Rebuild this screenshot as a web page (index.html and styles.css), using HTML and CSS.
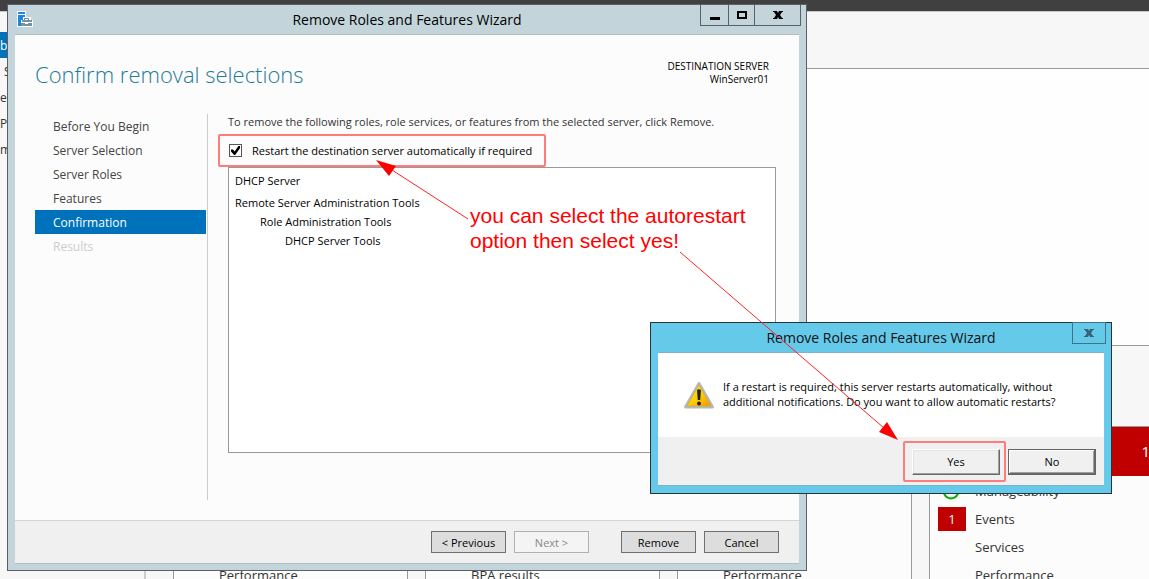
FILE: index.html
```html
<!DOCTYPE html>
<html lang="en">
<head>
<meta charset="utf-8">
<title>Remove Roles and Features Wizard</title>
<link rel="stylesheet" href="styles.css">
</head>
<body>
<div class="manager">
  <div class="topbar"></div>
  <div class="workspace">
    <nav class="sidebar" aria-label="Server Manager">
      <a class="side-link active" href="#">b</a>
      <a class="side-link inset" href="#">S</a>
      <a class="side-link" href="#">er</a>
      <a class="side-link" href="#">P</a>
      <a class="side-link" href="#">m</a>
    </nav>
    <main class="dashboard">
      <div class="toolbar"></div>
      <div class="welcome"></div>
      <section class="groups">
        <article class="tile"><ul class="tile-rows"><li class="row last">Performance</li></ul></article>
        <article class="tile"><ul class="tile-rows"><li class="row last">BPA results</li></ul></article>
        <article class="tile"><ul class="tile-rows"><li class="row last">Performance</li></ul></article>
        <article class="tile">
          <header class="tile-head">1</header>
          <ul class="tile-rows">
            <li class="row"><svg class="ok" viewBox="0 0 18 18" aria-hidden="true"><circle cx="9" cy="9" r="7.5"/><path d="M9 12V5M6 8l3-3 3 3"/></svg>Manageability</li>
            <li class="row"><span class="count">1</span>Events</li>
            <li class="row">Services</li>
            <li class="row last">Performance</li>
          </ul>
        </article>
      </section>
    </main>
  </div>
</div>

<section class="window wizard" aria-labelledby="wizard-title">
  <header class="titlebar">
    <svg class="app-icon" viewBox="0 0 17 17" aria-hidden="true">
      <path fill="#fff" d="M0 0h9v6h5v3h2v7H0z"/>
      <path fill="#1c86dc" d="M1 1h7v2H1zM1 4h7v2H6v3H4v6H1z"/>
      <path fill="#7590a0" d="M7 7h5v2h3v2H5V9h2zM4 12h4v1h3v-1h4v3H4z"/>
      <path fill="#fff" d="M8 8h3v1H8zM8 11h3v1H8z"/>
    </svg>
    <h1 class="title" id="wizard-title">Remove Roles and Features Wizard</h1>
    <div class="controls">
      <button class="control" aria-label="Minimize"><svg viewBox="0 0 12 10"><path d="M1 7h10v3H1z"/></svg></button>
      <button class="control maximize" aria-label="Maximize"><svg viewBox="0 0 12 10"><path fill-rule="evenodd" d="M1 1h10v8H1zM3 3v4h6V3z"/></svg></button>
      <button class="control close" aria-label="Close"><svg viewBox="0 0 12 10"><path d="M1 1h4l1 2 1-2h4v1h-1L8 5l2 3h1v1H7L6 7 5 9H1V8h1l2-3-2-3H1z"/></svg></button>
    </div>
  </header>
  <div class="wizard-body">
    <div class="wizard-head">
      <h2 class="heading">Confirm removal selections</h2>
      <p class="destination">DESTINATION SERVER<br>WinServer01</p>
    </div>
    <div class="wizard-main">
      <nav class="steps" aria-label="Wizard steps">
        <a class="step" href="#">Before You Begin</a>
        <a class="step" href="#">Server Selection</a>
        <a class="step" href="#">Server Roles</a>
        <a class="step" href="#">Features</a>
        <a class="step current" href="#" aria-current="step">Confirmation</a>
        <span class="step disabled">Results</span>
      </nav>
      <div class="page">
        <p class="intro">To remove the following roles, role services, or features from the selected server, click Remove.</p>
        <label class="restart"><input class="check" type="checkbox" checked>Restart the destination server automatically if required</label>
        <ul class="selections">
          <li class="role">DHCP Server</li>
          <li>Remote Server Administration Tools
            <ul>
              <li>Role Administration Tools
                <ul><li>DHCP Server Tools</li></ul>
              </li>
            </ul>
          </li>
        </ul>
      </div>
    </div>
    <footer class="wizard-foot">
      <button class="button">&lt; Previous</button>
      <button class="button" disabled>Next &gt;</button>
      <button class="button apart">Remove</button>
      <button class="button">Cancel</button>
    </footer>
  </div>
</section>

<section class="window dialog" role="dialog" aria-labelledby="dialog-title">
  <header class="titlebar">
    <h1 class="title" id="dialog-title">Remove Roles and Features Wizard</h1>
    <div class="controls">
      <button class="control close" aria-label="Close"><svg viewBox="0 0 12 10"><path d="M1 1h4l1 2 1-2h4v1h-1L8 5l2 3h1v1H7L6 7 5 9H1V8h1l2-3-2-3H1z"/></svg></button>
    </div>
  </header>
  <div class="message">
    <svg class="warning" viewBox="0 0 32 28" aria-hidden="true">
      <defs><linearGradient id="gold" x1="0" y1="0" x2="1" y2="1"><stop offset="0" stop-color="#fff200"/><stop offset=".55" stop-color="#fcc90a"/><stop offset="1" stop-color="#f09a00"/></linearGradient></defs>
      <path d="M16 2.500L29.500 26H2.500z" fill="#b4b8be" stroke="#b4b8be" stroke-width="3" stroke-linejoin="round"/>
      <path d="M16 4L28 25H4z" fill="url(#gold)" stroke="#d8a400" stroke-width=".6" stroke-linejoin="round"/>
      <path d="M14 9q2-1.500 4 0l-.8 10h-2.400z" fill="#222"/>
      <circle cx="16" cy="22.500" r="2" fill="#222"/>
    </svg>
    <p class="question">If a restart is required, this server restarts automatically, without<br>additional notifications. Do you want to allow automatic restarts?</p>
  </div>
  <footer class="dialog-foot">
    <span class="marked"><button class="classic">Yes</button></span>
    <button class="classic default">No</button>
  </footer>
</section>

<svg class="arrows" width="1149" height="579" viewBox="0 0 1149 579" aria-hidden="true">
  <path class="shaft" d="M468 219L392 170M680 252L884 428"/>
  <path class="tip" d="M376 160L396 166L389 176zM898 440L887 422L879 432z"/>
</svg>
<p class="note">you can select the autorestart<br>option then select yes!</p>
</body>
</html>
```
FILE: styles.css
```css
* { box-sizing: border-box; }
html, body { height: 100%; }
body {
  margin: 0;
  overflow: hidden;
  position: relative;
  background: #fff;
  color: #000;
  font: 12px/16px "Open Sans", "Noto Sans", sans-serif;
}
h1, h2, p, ul { margin: 0; padding: 0; font-weight: 400; }
ul { list-style: none; }
a { color: inherit; text-decoration: none; }
button { font: inherit; color: inherit; padding: 0; margin: 0; border-radius: 0; }

.manager { height: 100%; display: flex; flex-direction: column; overflow: hidden; }
.topbar { height: 12px; flex: none; background: #404040; border-bottom: 1px solid #c8c8c8; }
.workspace { flex: 1; display: flex; min-height: 0; }
.sidebar { flex: none; width: 146px; padding-top: 20px; background: #f7f7f7; border-right: 2px solid #ccc; color: #333; }
.side-link { display: block; height: 26px; line-height: 28px; font-size: 12px; }
.side-link.inset { padding-left: 4px; }
.side-link.active { background: #0072bc; color: #fff; }
.dashboard { flex: 1; min-width: 0; display: flex; flex-direction: column; background: #fefefe; }
.toolbar { flex: none; height: 57px; background: #f7f7f7; border-bottom: 1px solid #999; }
.welcome { flex: none; height: 276px; }
.groups {
  flex: 1;
  display: grid;
  grid-template-columns: repeat(4, 235px);
  gap: 17px;
  padding: 80px 0 0 27px;
  background: #f7f7f7;
  border-top: 1px solid #999;
}
.tile { display: flex; flex-direction: column; height: 164px; background: #fcfcfc; border: 1px solid #999; color: #333; font-size: 13px; }
.tile-head { height: 49px; line-height: 49px; padding-right: 13px; text-align: right; background: #c00000; color: #fff; font-size: 15px; }
.tile-rows { flex: 1; display: flex; flex-direction: column; padding-top: 1px; }
.row { position: relative; flex: none; height: 28px; line-height: 28px; padding-left: 45px; }
.row.last { margin-top: auto; }
.ok { position: absolute; left: 12px; top: 5px; width: 18px; height: 18px; fill: none; stroke: #00b000; stroke-width: 2; }
.count { position: absolute; left: 8px; top: 2px; width: 28px; height: 24px; line-height: 24px; text-align: center; background: #c00000; color: #fff; }

.window { position: absolute; display: flex; flex-direction: column; padding: 0 7px 7px; }
.wizard { left: 7px; top: 4px; width: 800px; height: 567px; padding-bottom: 6px; background: #c3d5db; border: 1px solid #596066; }
.titlebar { position: relative; flex: none; height: 29px; display: flex; align-items: center; justify-content: center; }
.title { font-size: 14px; line-height: 20px; }
.app-icon { position: absolute; left: 2px; top: 6px; width: 17px; height: 17px; }
.controls { position: absolute; right: -2px; top: -1px; display: flex; }
.control { width: 29px; height: 22px; display: flex; align-items: center; justify-content: center; background: transparent; border: 1px solid #596066; margin-left: -1px; }
.control.maximize { width: 27px; }
.control.close { width: 47px; }
.control svg { flex: none; width: 12px; height: 10px; }
.wizard-body { flex: 1; display: flex; flex-direction: column; background: #fcfcfc; border-top: 1px solid #afbec3; border-bottom: 1px solid #afbec3; }
.wizard-head { display: flex; justify-content: space-between; padding: 23px 30px 0 20px; }
.heading { font-size: 22px; line-height: 32px; font-weight: 300; color: #1f7b98; }
.destination { padding-top: 2px; font-size: 10px; line-height: 13px; text-align: right; }
.wizard-main { flex: 1; display: flex; padding: 24px 23px 20px 20px; }
.steps { width: 173px; padding-right: 1px; border-right: 1px solid #ccc; color: #444; }
.step { display: block; height: 24px; line-height: 26px; padding-left: 18px; }
.step.current { background: #0072bc; color: #fff; }
.step.disabled { color: #ccc; }
.page { flex: 1; display: flex; flex-direction: column; padding-left: 20px; }
.intro { font-size: 11px; color: #333; }
.restart { display: flex; align-items: center; gap: 10px; width: 328px; height: 33px; margin: 4px 0 0 -10px; padding-left: 9px; border: 2px solid #ff7c7c; border-radius: 2px; font-size: 11px; }
.check { appearance: none; position: relative; width: 13px; height: 13px; margin: 0; border: 1px solid #555; background: #fff; }
.check:checked::before { content: ""; position: absolute; inset: 1px; background: #000; clip-path: polygon(0 40%, 22% 40%, 40% 62%, 82% 0, 100% 0, 100% 24%, 46% 100%, 34% 100%, 0 62%); }
.selections { height: 286px; padding: 3px 6px; background: #fff; border: 1px solid #999; font-size: 11px; line-height: 19px; }
.selections ul { padding-left: 25px; }
.role { margin-bottom: 3px; }
.wizard-foot { flex: none; height: 43px; display: flex; justify-content: flex-end; gap: 8px; padding: 10px 20px 0 0; background: #f0f0f0; border-top: 1px solid #d5d5d5; }
.button { width: 75px; height: 22px; padding-top: 1px; background: #ddd; border: 1px solid #707070; font-size: 11px; }
.button:disabled { background: #f4f4f4; border-color: #adb2b5; color: #888; }
.button.apart { margin-left: 24px; }

.dialog { left: 650px; top: 322px; width: 462px; height: 172px; background: #65c9ea; border: 1px solid #26343b; }
.dialog .title { color: #111; }
.dialog .control { width: 34px; border-color: #3f7389; }
.dialog .control svg { fill: #376478; }
.message { flex: 1; display: flex; align-items: center; gap: 8px; padding-left: 25px; background: #fff; border-top: 1px solid #7fb2ca; }
.warning { width: 32px; height: 28px; }
.question { padding-bottom: 2px; font-size: 11px; line-height: 15px; }
.dialog-foot { flex: none; height: 49px; display: flex; justify-content: flex-end; align-items: center; gap: 2px; padding: 1px 8px 0 0; background: #f0f0f0; border-bottom: 1px solid #7fb2ca; }
.marked { display: flex; padding: 6px 4px 5px 7px; border: 2px solid #ff7c7c; border-radius: 2px; }
.classic { width: 88px; height: 26px; background: #f0f0f0; border: 1px solid; border-color: #fff #696969 #696969 #fff; box-shadow: inset -1px -1px #a0a0a0, inset 1px 1px #e3e3e3; font-size: 11px; }
.classic.default { border-color: #646464; box-shadow: inset -1px -1px #696969, inset 1px 1px #fff, inset -2px -2px #a0a0a0; }

.arrows { position: absolute; left: 0; top: 0; pointer-events: none; }
.shaft { fill: none; stroke: #f22; stroke-width: 1; }
.tip { fill: #f00; }
.note { position: absolute; left: 470px; top: 203px; color: #f00; font: 21px/25px "Liberation Sans", Arial, sans-serif; white-space: nowrap; }
```
